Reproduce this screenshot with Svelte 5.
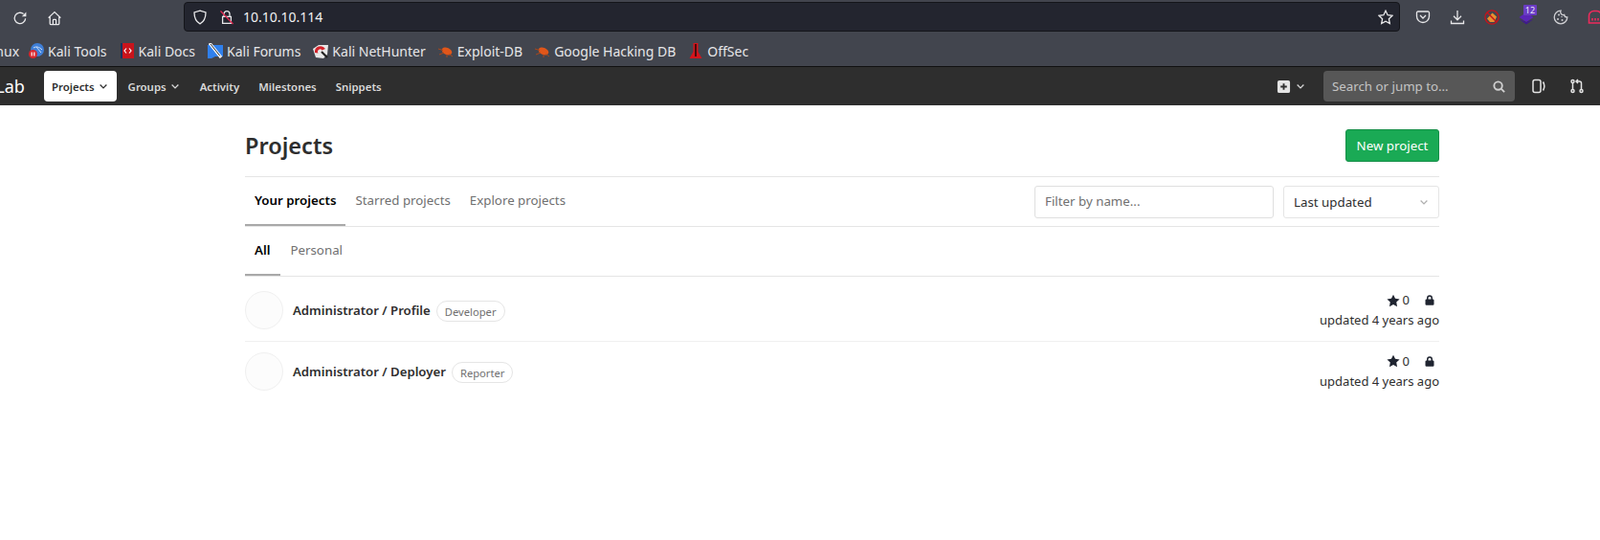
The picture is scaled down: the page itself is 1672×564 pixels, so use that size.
<script>
	const bookmarks = [
		{ label: 'Kali Linux', icon: 'none' },
		{ label: 'Kali Tools', icon: 'tools' },
		{ label: 'Kali Docs', icon: 'docs' },
		{ label: 'Kali Forums', icon: 'forums' },
		{ label: 'Kali NetHunter', icon: 'nethunter' },
		{ label: 'Exploit-DB', icon: 'bug' },
		{ label: 'Google Hacking DB', icon: 'bug' },
		{ label: 'OffSec', icon: 'offsec' }
	];

	const projects = [
		{ name: 'Administrator / Profile', role: 'Developer' },
		{ name: 'Administrator / Deployer', role: 'Reporter' }
	];
</script>

<div class="page">
	<header class="toolbar">
		<svg class="tool reload" viewBox="0 0 16 16"><path d="M13.6 8.2A5.7 5.7 0 1 1 11.6 3.6" /><path class="fill" d="M14.4 1.6v4.6H9.8z" /></svg>
		<svg class="tool home" viewBox="0 0 16 16"><path d="M1.6 7.6 8 1.6l6.4 6M3.2 6.4v7a1.2 1.2 0 0 0 1.2 1.2h7.2a1.2 1.2 0 0 0 1.2-1.2v-7M6.4 14.6v-4.4a.8.8 0 0 1 .8-.8h1.600a.8.8 0 0 1 .8.8v4.400" /></svg>
		<div class="urlbar">
			<svg class="tool shield" viewBox="0 0 16 16"><path d="M8 1.200 14 3c0 6-1.600 9.600-6 11.800C3.600 12.600 2 9 2 3z" /></svg>
			<svg class="tool lock" viewBox="0 0 16 16">
				<path d="M5 7V4.600a3 3 0 0 1 6 0V7M3.600 7.400h8.800v7H3.600z" />
				<path class="strike" d="M1.500 1.500l13 13.500" />
			</svg>
			<span class="url">10.10.10.114</span>
			<svg class="tool star" viewBox="0 0 16 16"><path d="M8 1.200l2.100 4.500 4.900.6-3.600 3.400.9 4.900L8 12.200l-4.300 2.400.9-4.900L1 6.300l4.900-.6z" /></svg>
		</div>
		<div class="extensions">
			<svg class="tool" viewBox="0 0 16 16"><path d="M2.800 2h10.400A1.300 1.300 0 0 1 14.500 3.300V7A6.500 6.500 0 0 1 1.500 7V3.300A1.300 1.300 0 0 1 2.800 2z" /><path d="M5 6l3 3 3-3" /></svg>
			<svg class="tool" viewBox="0 0 16 16"><path d="M8 1v9.500M4 6.800l4 4 4-4M1.500 11.500v3h13v-3" /></svg>
			<svg class="ext" viewBox="0 0 16 16">
				<path d="M3 9.500 8.500 3.500 13 7.500 10.500 13H6z" fill="#e8902f" />
				<circle cx="8" cy="8" r="7.100" fill="none" stroke="#c3141c" stroke-width="1.400" />
				<path d="M3 3l10 10" stroke="#c3141c" stroke-width="1.400" />
			</svg>
			<div class="stack">
				<svg class="ext" viewBox="0 0 16 16">
					<path d="M8 3l7.500 5L8 13 .5 8z" fill="#5b25b8" />
					<path d="M.5 10 8 15.500 15.500 10 8 13z" fill="#3f1a8e" />
				</svg>
				<span class="count">12</span>
			</div>
			<svg class="tool cookie" viewBox="0 0 16 16">
				<path d="M8 1.200a6.800 6.800 0 1 0 6.800 6.800 3 3 0 0 1-3.200-2.600A3 3 0 0 1 8 1.200z" />
				<circle class="fill" cx="6" cy="5.500" r="1" /><circle class="fill" cx="5" cy="10" r="1" /><circle class="fill" cx="9.500" cy="11" r="1" /><circle class="fill" cx="9" cy="7.500" r=".7" />
			</svg>
			<svg class="tool red" viewBox="0 0 16 16"><path d="M1.500 14V6.500a5 5 0 0 1 5-5h3a5 5 0 0 1 5 5V14zM5 9v2.500M8 9v2.500M11 9v2.500" /></svg>
		</div>
	</header>

	<nav class="bookmarks">
		{#each bookmarks as b}
			<div class="bookmark">
				{#if b.icon === 'tools'}
					<svg class="fav" viewBox="0 0 16 16">
						<circle cx="9" cy="7" r="7" fill="#3f7fd8" />
						<path d="M5 5c3-2 6-1 9 2M8 4l5 6" stroke="#cfe0f7" fill="none" />
						<circle cx="4.500" cy="11.500" r="4.500" fill="#d9262c" />
						<path d="M3.200 9.500v4M5.800 9.500v4" stroke="#fff" stroke-width="1.200" />
					</svg>
				{:else if b.icon === 'docs'}
					<svg class="fav" viewBox="0 0 16 16">
						<path d="M1 0h14v16H1z" fill="#c8141c" />
						<path d="M1 0h2v16H1z" fill="#16335f" />
						<path d="M7 5.500 5 8l2 2.500M10 5.500 12 8l-2 2.500" stroke="#fff" stroke-width="1.200" fill="none" />
					</svg>
				{:else if b.icon === 'forums'}
					<svg class="fav" viewBox="0 0 16 16">
						<path d="M0 2h16v12H8l-4 2H0z" fill="#2f80ed" />
						<path d="M2 0l12 15" stroke="#fff" stroke-width="3" />
						<path d="M3 1l10 12.500" stroke="#222" />
					</svg>
				{:else if b.icon === 'nethunter'}
					<svg class="fav" viewBox="0 0 16 16">
						<path d="M0 6l6-4h10l-1 10-4 4-8-1z" fill="#e8e8e8" />
						<path d="M2 10a6 6 0 0 1 11-4l-3.500 1.500a2.500 2.500 0 0 0-4 3z" fill="#d3222a" />
						<path d="M9 9l6 6" stroke="#222" stroke-width="2.200" />
					</svg>
				{:else if b.icon === 'bug'}
					<svg class="fav" viewBox="0 0 16 16">
						<ellipse cx="9" cy="8.500" rx="5.600" ry="3.600" fill="#e0561a" transform="rotate(25 9 8.500)" />
						<path d="M0 6l5 1.500M1 12l5-2M15 14l-3.500-2.500M9 15l0-3" stroke="#a9481c" />
					</svg>
				{:else if b.icon === 'offsec'}
					<svg class="fav" viewBox="0 0 16 16">
						<path d="M5.500 0h5v9l4 7h-13l4-7z" fill="#d4141c" />
						<path d="M8 1v13" stroke="#3a0a0c" stroke-width="1.800" />
					</svg>
				{/if}
				<span>{b.label}</span>
			</div>
		{/each}
	</nav>

	<nav class="navbar">
		<span class="brand">GitLab</span>
		<ul class="links">
			<li class="active">Projects <svg viewBox="0 0 16 16"><path d="M3.500 6l4.500 4.500L12.500 6" /></svg></li>
			<li>Groups <svg viewBox="0 0 16 16"><path d="M3.500 6l4.500 4.500L12.500 6" /></svg></li>
			<li>Activity</li>
			<li>Milestones</li>
			<li>Snippets</li>
		</ul>
		<div class="nav-right">
			<div class="new-menu">
				<svg class="plus" viewBox="0 0 16 16"><path fill-rule="evenodd" d="M3 1h10a2 2 0 0 1 2 2v10a2 2 0 0 1-2 2H3a2 2 0 0 1-2-2V3a2 2 0 0 1 2-2zm4 3.500v2.500H4.500v2H7v2.500h2V9h2.500V7H9V4.500z" /></svg>
				<svg class="chev" viewBox="0 0 16 16"><path d="M3.500 6l4.500 4.500L12.500 6" /></svg>
			</div>
			<div class="search">
				<span>Search or jump to…</span>
				<svg viewBox="0 0 16 16"><circle cx="7" cy="7" r="4.500" /><path d="M10.500 10.500 14 14" /></svg>
			</div>
			<svg class="nav-icon" viewBox="0 0 16 16"><rect x="2" y="1.500" width="8" height="13" rx="2" /><path d="M12.500 3.500c1.500 2.500 1.500 6.500 0 9" /></svg>
			<svg class="nav-icon" viewBox="0 0 16 16"><circle cx="3.500" cy="13" r="1.500" /><circle cx="12.500" cy="13" r="1.500" /><circle cx="3.500" cy="3" r="1.500" /><path d="M3.500 4.500v7M12.500 11.500V5a2 2 0 0 0-2-2H7.500M9 1 7 3l2 2" /></svg>
		</div>
	</nav>

	<main class="content">
		<div class="title-row">
			<h1>Projects</h1>
			<button class="new-project">New project</button>
		</div>

		<div class="tabs-row">
			<ul class="tabs">
				<li class="current">Your projects</li>
				<li>Starred projects</li>
				<li>Explore projects</li>
			</ul>
			<div class="filters">
				<input placeholder="Filter by name..." />
				<div class="sort">
					<span>Last updated</span>
					<svg viewBox="0 0 16 16"><path d="M3.500 6l4.500 4.500L12.500 6" /></svg>
				</div>
			</div>
		</div>

		<ul class="tabs sub">
			<li class="current">All</li>
			<li>Personal</li>
		</ul>

		<div class="list">
			{#each projects as p}
				<div class="project">
					<div class="avatar"></div>
					<span class="name">{p.name}</span>
					<span class="role">{p.role}</span>
					<div class="meta">
						<div class="stats">
							<svg viewBox="0 0 16 16"><path d="M8 .8l2.300 4.700 5.200.7-3.800 3.600.9 5.200L8 12.500l-4.600 2.500.9-5.200L.5 6.200l5.200-.7z" /></svg>
							<span>0</span>
							<svg class="padlock" viewBox="0 0 16 16"><path fill-rule="evenodd" d="M4 6.500V5a4 4 0 0 1 8 0v1.500h.5A1.500 1.500 0 0 1 14 8v5.500a1.500 1.500 0 0 1-1.500 1.500h-9A1.500 1.500 0 0 1 2 13.500V8a1.500 1.500 0 0 1 1.500-1.500zm2 0h4V5a2 2 0 0 0-4 0z" /></svg>
						</div>
						<div class="updated">updated 4 years ago</div>
					</div>
				</div>
			{/each}
		</div>
	</main>
</div>

<style>
	:global(body) {
		margin: 0;
		background: #fff;
	}

	.page {
		width: 1672px;
		height: 564px;
		overflow: hidden;
		font-family: "Noto Sans", sans-serif;
		font-size: 13.300px;
		color: #2e2e2e;
	}

	ul {
		list-style: none;
		margin: 0;
		padding: 0;
	}

	/* browser chrome */
	.toolbar {
		height: 37px;
		background: #42454e;
		display: flex;
		align-items: center;
		padding-left: 13px;
		box-sizing: border-box;
	}

	.tool {
		width: 16px;
		height: 16px;
		flex: none;
		fill: none;
		stroke: #e8e8ea;
		stroke-width: 1.300;
	}

	.tool .fill {
		fill: #e8e8ea;
		stroke: none;
	}

	.home {
		margin-left: 20px;
	}

	.urlbar {
		flex: none;
		width: 1271px;
		height: 31px;
		margin-left: 127px;
		margin-top: -2px;
		background: #23252f;
		border: 1px solid #14151a;
		border-radius: 4px;
		box-sizing: border-box;
		display: flex;
		align-items: center;
		padding: 0 6px 0 8px;
	}

	.lock {
		margin-left: 12px;
	}

	.lock .strike {
		stroke: #e22850;
	}

	.url {
		margin-left: 9px;
		font-size: 14px;
		color: #f0f0f2;
		flex: 1;
	}

	.extensions {
		flex: none;
		display: flex;
		align-items: center;
		gap: 20px;
		margin-left: 16px;
		margin-top: -2px;
	}

	.ext {
		width: 16px;
		height: 16px;
		display: block;
	}

	.stack {
		position: relative;
	}

	.count {
		position: absolute;
		left: 5px;
		top: -5px;
		width: 14px;
		height: 11px;
		background: #6a3cc4;
		color: #ece6fa;
		font-size: 9px;
		line-height: 11px;
		text-align: center;
		border-radius: 1px;
	}

	.cookie {
		stroke: #cfcfd3;
	}

	.cookie .fill {
		fill: #cfcfd3;
	}

	.red {
		stroke: #ee2a5c;
		stroke-width: 1.600;
	}

	.bookmarks {
		height: 32px;
		background: #42454e;
		display: flex;
		align-items: center;
		gap: 13px;
		border-bottom: 1px solid #111;
		box-sizing: content-box;
		color: #e6e6e8;
		font-size: 14px;
	}

	.bookmark {
		display: flex;
		align-items: center;
		gap: 4px;
		white-space: nowrap;
	}

	.bookmark:first-child {
		margin-left: -43px;
		margin-right: -3px;
	}

	.fav {
		width: 16px;
		height: 16px;
		flex: none;
	}

	/* gitlab navbar */
	.navbar {
		height: 40px;
		background: #2e2e2e;
		display: flex;
		align-items: center;
		color: #fff;
	}

	.brand {
		margin-left: -29px;
		font-size: 18px;
		width: 75px;
		flex: none;
	}

	.links {
		display: flex;
		align-items: center;
		font-size: 11.400px;
		font-weight: 600;
		color: #d9d9d9;
		gap: 4px;
	}

	.links li {
		height: 32px;
		padding: 0 8px;
		display: flex;
		align-items: center;
		gap: 3px;
		border-radius: 4px;
		box-sizing: border-box;
	}

	.links li.active {
		background: #fff;
		color: #2e2e2e;
	}

	.links svg,
	.chev,
	.sort svg {
		width: 12px;
		height: 12px;
		fill: none;
		stroke: currentColor;
		stroke-width: 1.700;
	}

	.nav-right {
		margin-left: auto;
		display: flex;
		align-items: center;
	}

	.new-menu {
		display: flex;
		align-items: center;
		gap: 4px;
		color: #d9d9d9;
		margin-right: 18px;
	}

	.plus {
		width: 15px;
		height: 15px;
		fill: #e4e4e4;
	}

	.search {
		width: 200px;
		height: 32px;
		background: #575757;
		border-radius: 4px;
		display: flex;
		align-items: center;
		justify-content: space-between;
		padding: 0 9px;
		box-sizing: border-box;
		color: #c4c4c4;
	}

	.search svg {
		width: 15px;
		height: 15px;
		fill: none;
		stroke: #d0d0d0;
		stroke-width: 2;
	}

	.nav-icon {
		width: 16px;
		height: 16px;
		fill: none;
		stroke: #e4e4e4;
		stroke-width: 1.500;
		margin-left: 17px;
	}

	.nav-icon + .nav-icon {
		margin-left: 24px;
		margin-right: 16px;
	}

	/* page content */
	.content {
		width: 1248px;
		margin-left: 256px;
	}

	.title-row {
		height: 75px;
		display: flex;
		align-items: center;
		justify-content: space-between;
		border-bottom: 1px solid #e5e5e5;
		box-sizing: border-box;
		padding-top: 9px;
	}

	h1 {
		margin: 0;
		font-size: 23.500px;
		font-weight: 600;
	}

	.new-project {
		width: 98px;
		height: 34px;
		background: #1aaa55;
		border: 1px solid #168f48;
		border-radius: 3px;
		color: #fff;
		font: 13.300px "Noto Sans", sans-serif;
		padding: 0;
	}

	.tabs-row {
		display: flex;
		justify-content: space-between;
		align-items: center;
		height: 52px;
		border-bottom: 1px solid #e5e5e5;
		box-sizing: border-box;
	}

	.tabs {
		display: flex;
		height: 100%;
		color: #707070;
	}

	.tabs li {
		padding: 0 10px 3px;
		display: flex;
		align-items: center;
		box-sizing: border-box;
		height: 100%;
	}

	.tabs li.current {
		color: #000;
		font-weight: 600;
		box-shadow: inset 0 -2px 0 #a9a9a9;
	}

	.filters {
		display: flex;
		gap: 10px;
	}

	input {
		width: 250px;
		height: 34px;
		box-sizing: border-box;
		border: 1px solid #dfdfdf;
		border-radius: 3px;
		padding: 0 10px 1px;
		font: 13.300px "Noto Sans", sans-serif;
		color: #2e2e2e;
	}

	input::placeholder {
		color: #707070;
		opacity: 1;
	}

	.sort {
		width: 163px;
		height: 34px;
		box-sizing: border-box;
		border: 1px solid #e5e5e5;
		border-radius: 3px;
		padding: 0 9px 0 10px;
		display: flex;
		align-items: center;
		justify-content: space-between;
		color: #2e2e2e;
	}

	.sort svg {
		color: #b0b0b0;
	}

	.sub {
		height: 52px;
		border-bottom: 1px solid #e5e5e5;
		box-sizing: border-box;
	}

	.sub li.current {
		padding-right: 11px;
	}

	.list {
		padding-top: 4px;
	}

	.project {
		height: 64px;
		padding-bottom: 1px;
		border-bottom: 1px solid #f0f0f0;
		box-sizing: border-box;
		display: flex;
		align-items: center;
	}

	.project:last-child {
		height: 61px;
		padding-bottom: 0;
		border-bottom: none;
	}

	.avatar {
		width: 40px;
		height: 40px;
		box-sizing: border-box;
		border: 1px solid #f0f0f0;
		border-radius: 50%;
		background: #fcfcfc;
		margin-right: 10px;
	}

	.name {
		font-weight: 600;
		font-size: 13.200px;
	}

	.role {
		margin-left: 6px;
		padding: 0 8px;
		height: 22px;
		line-height: 21px;
		box-sizing: border-box;
		border: 1px solid #e5e5e5;
		border-radius: 11px;
		font-size: 11.200px;
		color: #707070;
		margin-top: 2px;
	}

	.meta {
		margin-left: auto;
		text-align: right;
		line-height: 21px;
		font-size: 13px;
	}

	.stats {
		display: flex;
		justify-content: flex-end;
		align-items: center;
	}

	.stats svg {
		width: 14px;
		height: 14px;
		fill: #1f2430;
		margin-right: 3px;
	}

	.stats .padlock {
		width: 12px;
		height: 13px;
		margin: 0 4px 0 15px;
	}

	.updated {
		color: #2e2e2e;
	}
</style>
